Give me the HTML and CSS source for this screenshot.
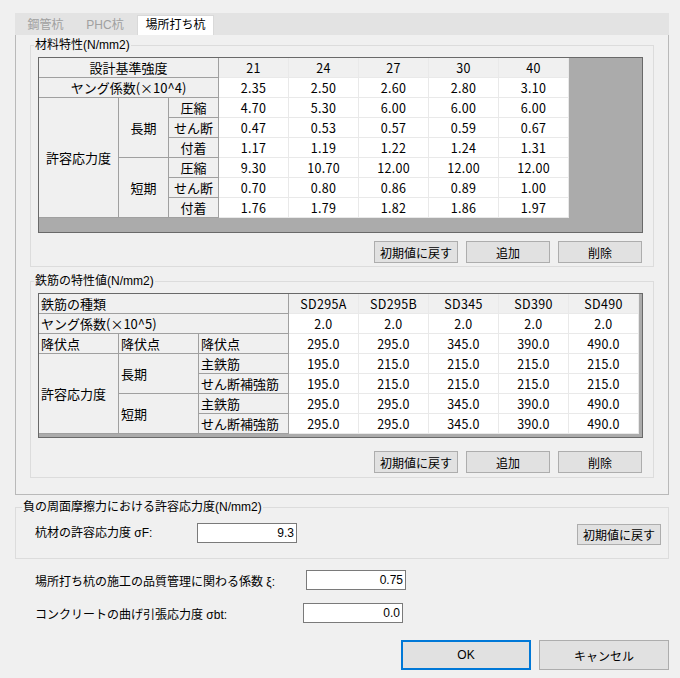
FILE: index.html
```html
<!DOCTYPE html>
<html lang="ja">
  <head>
    <meta charset="UTF-8" />
    <meta name="viewport" content="width=device-width, initial-scale=1.0" />
    <title>場所打ち杭 材料特性</title>
    <link rel="stylesheet" href="styles.css">
  </head>
  <body>
    <div class="dialog">
      <!-- タブ -->
      <div class="tabbar">
        <span class="tab">鋼管杭</span>
        <span class="tab tab-phc">PHC杭</span>
        <span class="tab active">場所打ち杭</span>
      </div>

      <!-- タブの中身 -->
      <div class="panel">
        <!-- 材料特性 -->
        <fieldset class="group group-mat">
          <legend>材料特性(N/mm2)</legend>
          <div class="gridbox mat-box">
            <table class="grid mat">
              <colgroup>
                <col style="width:80px"><col style="width:50px"><col style="width:50px">
                <col style="width:70px"><col style="width:70px"><col style="width:70px"><col style="width:70px"><col style="width:70px">
              </colgroup>
              <tr class="head">
                <td class="lbl" colspan="3">設計基準強度</td>
                <td>21</td><td>24</td><td>27</td><td>30</td><td>40</td>
              </tr>
              <tr>
                <td class="lbl" colspan="3">ヤング係数(×10^4)</td>
                <td>2.35</td><td>2.50</td><td>2.60</td><td>2.80</td><td>3.10</td>
              </tr>
              <tr>
                <td class="lbl" rowspan="6">許容応力度</td>
                <td class="lbl" rowspan="3">長期</td>
                <td class="lbl">圧縮</td>
                <td>4.70</td><td>5.30</td><td>6.00</td><td>6.00</td><td>6.00</td>
              </tr>
              <tr>
                <td class="lbl">せん断</td>
                <td>0.47</td><td>0.53</td><td>0.57</td><td>0.59</td><td>0.67</td>
              </tr>
              <tr>
                <td class="lbl">付着</td>
                <td>1.17</td><td>1.19</td><td>1.22</td><td>1.24</td><td>1.31</td>
              </tr>
              <tr>
                <td class="lbl" rowspan="3">短期</td>
                <td class="lbl">圧縮</td>
                <td>9.30</td><td>10.70</td><td>12.00</td><td>12.00</td><td>12.00</td>
              </tr>
              <tr>
                <td class="lbl">せん断</td>
                <td>0.70</td><td>0.80</td><td>0.86</td><td>0.89</td><td>1.00</td>
              </tr>
              <tr>
                <td class="lbl">付着</td>
                <td>1.76</td><td>1.79</td><td>1.82</td><td>1.86</td><td>1.97</td>
              </tr>
            </table>
          </div>
          <div class="btnrow">
            <button>初期値に戻す</button>
            <button>追加</button>
            <button>削除</button>
          </div>
        </fieldset>

        <!-- 鉄筋の特性値 -->
        <fieldset class="group group-bar">
          <legend>鉄筋の特性値(N/mm2)</legend>
          <div class="gridbox bar-box">
            <table class="grid bar">
              <colgroup>
                <col style="width:80px"><col style="width:80px"><col style="width:90px">
                <col style="width:70px"><col style="width:70px"><col style="width:70px"><col style="width:70px"><col style="width:70px">
              </colgroup>
              <tr class="head">
                <td class="lbl" colspan="3">鉄筋の種類</td>
                <td>SD295A</td><td>SD295B</td><td>SD345</td><td>SD390</td><td>SD490</td>
              </tr>
              <tr>
                <td class="lbl" colspan="3">ヤング係数(×10^5)</td>
                <td>2.0</td><td>2.0</td><td>2.0</td><td>2.0</td><td>2.0</td>
              </tr>
              <tr>
                <td class="lbl">降伏点</td><td class="lbl">降伏点</td><td class="lbl">降伏点</td>
                <td>295.0</td><td>295.0</td><td>345.0</td><td>390.0</td><td>490.0</td>
              </tr>
              <tr>
                <td class="lbl" rowspan="4">許容応力度</td>
                <td class="lbl" rowspan="2">長期</td>
                <td class="lbl">主鉄筋</td>
                <td>195.0</td><td>215.0</td><td>215.0</td><td>215.0</td><td>215.0</td>
              </tr>
              <tr>
                <td class="lbl">せん断補強筋</td>
                <td>195.0</td><td>215.0</td><td>215.0</td><td>215.0</td><td>215.0</td>
              </tr>
              <tr>
                <td class="lbl" rowspan="2">短期</td>
                <td class="lbl">主鉄筋</td>
                <td>295.0</td><td>295.0</td><td>345.0</td><td>390.0</td><td>490.0</td>
              </tr>
              <tr>
                <td class="lbl">せん断補強筋</td>
                <td>295.0</td><td>295.0</td><td>345.0</td><td>390.0</td><td>490.0</td>
              </tr>
            </table>
          </div>
          <div class="btnrow">
            <button>初期値に戻す</button>
            <button>追加</button>
            <button>削除</button>
          </div>
        </fieldset>
      </div>

      <!-- 負の周面摩擦力 -->
      <fieldset class="group group-nf">
        <legend>負の周面摩擦力における許容応力度(N/mm2)</legend>
        <div class="nf-row">
          <span class="nf-label">杭材の許容応力度 σF:</span>
          <input class="num" type="text" value="9.3">
          <button class="nf-reset">初期値に戻す</button>
        </div>
      </fieldset>

      <div class="field field-xi">
        <span class="field-label">場所打ち杭の施工の品質管理に関わる係数 ξ:</span>
        <input class="num" type="text" value="0.75">
      </div>
      <div class="field field-bt">
        <span class="field-label">コンクリートの曲げ引張応力度 σbt:</span>
        <input class="num" type="text" value="0.0">
      </div>

      <!-- OK / キャンセル -->
      <div class="footer">
        <button class="ok">OK</button>
        <button class="cancel">キャンセル</button>
      </div>
    </div>
  </body>
</html>
```

FILE: styles.css
```css
html,
body {
  margin: 0;
  padding: 0;
}
body {
  width: 680px;
  height: 678px;
  overflow: hidden;
  background: #f0f0f0;
  font-family: "Liberation Sans", "Noto Sans CJK JP", sans-serif;
  font-size: 12px;
  color: #000;
}

/* 全体 */
.dialog {
  padding: 13px 11px 0 15px;
}

/* タブ */
.tabbar {
  display: flex;
  align-items: flex-end;
  height: 22px;
  background: #e3e3e3;
}
.tab {
  width: 61px;
  height: 20px;
  line-height: 20px;
  text-align: center;
  color: #a0a0a0;
}
.tab-phc {
  width: 58px;
  margin-right: 3px;
}
.tab.active {
  width: 75px;
  height: 19px;
  line-height: 19px;
  background: #fff;
  border: 1px solid #d9d9d9;
  border-bottom: none;
  color: #000;
}

/* タブの中身 */
.panel {
  box-sizing: border-box;
  height: 460px;
  padding: 3px 14px 0;
  border: 1px solid #b9b9b9;
  border-top: none;
}

/* グループ枠 */
.group {
  margin: 0;
  padding: 0;
  min-width: 0;
  border: 1px solid #dcdcdc;
}
.group legend {
  margin-left: 3px;
  padding: 0 1px;
  line-height: 14px;
}
.group-mat {
  padding-bottom: 3px;
}
.group-bar {
  margin-top: 7px;
  padding-bottom: 4px;
}

/* グリッド */
.gridbox {
  box-sizing: border-box;
  width: 605px;
  margin: 5px 0 0 7px;
  border: 1px solid #696969;
  background: #ababab;
  overflow: hidden;
}
.mat-box {
  height: 176px;
}
.bar-box {
  height: 145px;
}
.grid {
  table-layout: fixed;
  border-collapse: separate;
  border-spacing: 0;
}
.mat {
  width: 530px;
}
.bar {
  width: 600px;
}
.grid tr {
  height: 20px;
}
.grid td {
  padding: 0;
  line-height: 19px;
  text-align: center;
  white-space: nowrap;
  background: #fff;
  border-right: 1px solid #e9e9e9;
  border-bottom: 1px solid #e9e9e9;
  font-family: "Noto Sans CJK JP", sans-serif;
  font-size: 12.5px;
  font-variant-numeric: tabular-nums;
  letter-spacing: 0.3px;
}
.grid .head td {
  background: #f0f0f0;
}
.grid td.lbl {
  background: #f0f0f0;
  border-color: #a0a0a0;
  font-size: 13px;
  letter-spacing: 0;
}
.bar td.lbl {
  text-align: left;
  padding-left: 2px;
}

/* ボタン */
button {
  box-sizing: border-box;
  width: 84px;
  height: 22px;
  padding: 0;
  font: inherit;
  color: #000;
  background: #e1e1e1;
  border: 1px solid #adadad;
}
.btnrow {
  display: flex;
  justify-content: flex-end;
  gap: 8px;
  margin: 8px 11px 0 0;
}
.group-bar .btnrow {
  margin-top: 13px;
}

/* 負の周面摩擦力 */
.group-nf {
  margin-top: 5px;
  padding-bottom: 13px;
}
.group-nf legend {
  margin-left: 6px;
}
.nf-row {
  display: flex;
  align-items: flex-start;
  margin-top: 9px;
  padding: 0 7px 0 19px;
}
.nf-label {
  width: 162px;
  line-height: 20px;
}
.nf-reset {
  height: 21px;
  margin: 1px 0 0 auto;
}

/* 入力欄 */
.num {
  box-sizing: border-box;
  width: 100px;
  height: 20px;
  margin: 0;
  padding: 0 2px;
  border: 1px solid #7a7a7a;
  background: #fff;
  text-align: right;
  font: inherit;
}
.field {
  display: flex;
  align-items: center;
  padding-left: 20px;
}
.field-xi {
  margin-top: 11px;
}
.field-xi .field-label {
  width: 271px;
}
.field-bt {
  margin-top: 13px;
}
.field-bt .field-label {
  width: 268px;
}

/* OK / キャンセル */
.footer {
  display: flex;
  justify-content: flex-end;
  gap: 8px;
  margin-top: 17px;
}
.footer button {
  width: 130px;
  height: 30px;
}
.footer .ok {
  border: 2px solid #0078d7;
}
```
